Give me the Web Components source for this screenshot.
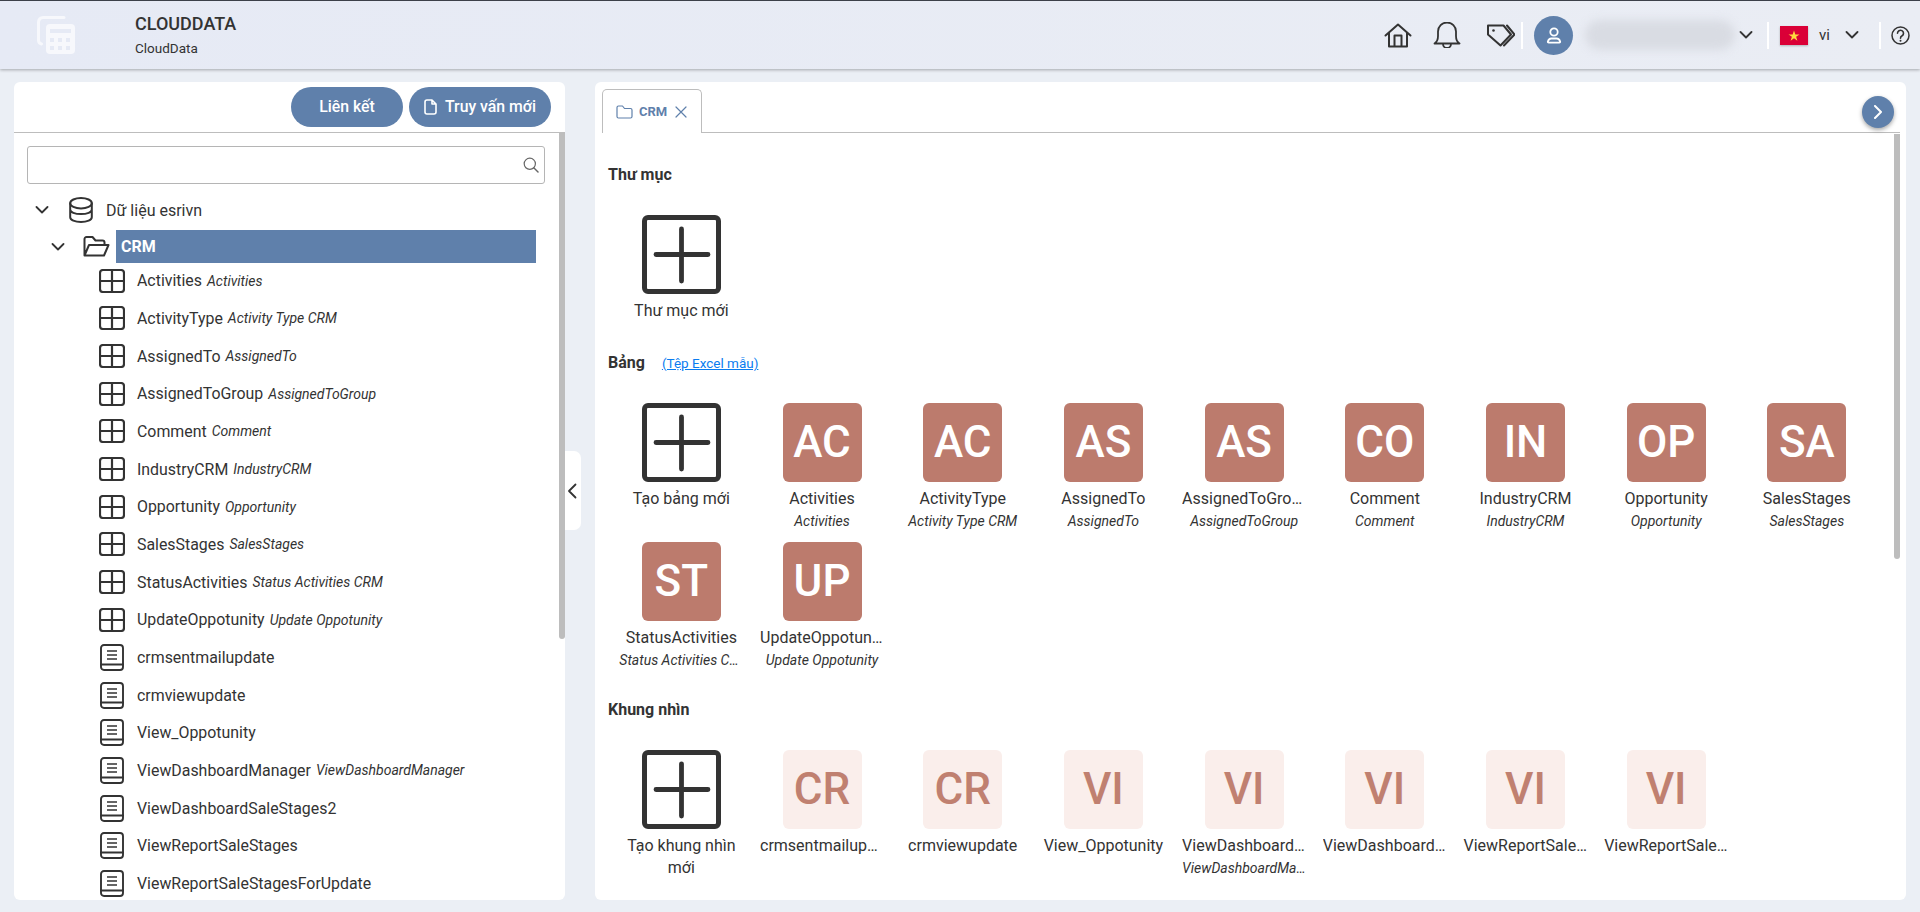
<!DOCTYPE html>
<html lang="vi">
<head>
<meta charset="utf-8">
<title>CloudData</title>
<style>
html,body{margin:0;padding:0;height:912px;overflow:hidden;background:#ebeff5;font-family:Roboto,"Noto Sans",sans-serif;color:#333}
body{display:flex;flex-direction:column}
</style>
</head>
<body>
<app-header></app-header>
<main-layout>
  <side-panel slot="left">
    <db-row>Dữ liệu esrivn</db-row>
    <crm-row>CRM</crm-row>
    <tree-row icon="table">Activities<span slot="sub">Activities</span></tree-row>
    <tree-row icon="table">ActivityType<span slot="sub">Activity Type CRM</span></tree-row>
    <tree-row icon="table">AssignedTo<span slot="sub">AssignedTo</span></tree-row>
    <tree-row icon="table">AssignedToGroup<span slot="sub">AssignedToGroup</span></tree-row>
    <tree-row icon="table">Comment<span slot="sub">Comment</span></tree-row>
    <tree-row icon="table">IndustryCRM<span slot="sub">IndustryCRM</span></tree-row>
    <tree-row icon="table">Opportunity<span slot="sub">Opportunity</span></tree-row>
    <tree-row icon="table">SalesStages<span slot="sub">SalesStages</span></tree-row>
    <tree-row icon="table">StatusActivities<span slot="sub">Status Activities CRM</span></tree-row>
    <tree-row icon="table">UpdateOppotunity<span slot="sub">Update Oppotunity</span></tree-row>
    <tree-row icon="book">crmsentmailupdate</tree-row>
    <tree-row icon="book">crmviewupdate</tree-row>
    <tree-row icon="book">View_Oppotunity</tree-row>
    <tree-row icon="book">ViewDashboardManager<span slot="sub">ViewDashboardManager</span></tree-row>
    <tree-row icon="book">ViewDashboardSaleStages2</tree-row>
    <tree-row icon="book">ViewReportSaleStages</tree-row>
    <tree-row icon="book">ViewReportSaleStagesForUpdate</tree-row>
  </side-panel>
  <content-panel slot="right">
    <item-section heading="Thư mục" gap="-2">
      <plus-tile>Thư mục mới</plus-tile>
    </item-section>
    <item-section heading="Bảng" link="(Tệp Excel mẫu)" gap="18">
      <plus-tile>Tạo bảng mới</plus-tile>
      <data-tile code="AC" sub="Activities">Activities</data-tile>
      <data-tile code="AC" sub="Activity Type CRM">ActivityType</data-tile>
      <data-tile code="AS" sub="AssignedTo">AssignedTo</data-tile>
      <data-tile code="AS" sub="AssignedToGroup">AssignedToGroup</data-tile>
      <data-tile code="CO" sub="Comment">Comment</data-tile>
      <data-tile code="IN" sub="IndustryCRM">IndustryCRM</data-tile>
      <data-tile code="OP" sub="Opportunity">Opportunity</data-tile>
      <data-tile code="SA" sub="SalesStages">SalesStages</data-tile>
      <data-tile code="ST" sub="Status Activities CRM">StatusActivities</data-tile>
      <data-tile code="UP" sub="Update Oppotunity">UpdateOppotunity</data-tile>
    </item-section>
    <item-section heading="Khung nhìn" gap="0">
      <plus-tile>Tạo khung nhìn mới</plus-tile>
      <data-tile light code="CR">crmsentmailupdate</data-tile>
      <data-tile light code="CR">crmviewupdate</data-tile>
      <data-tile light code="VI">View_Oppotunity</data-tile>
      <data-tile light code="VI" sub="ViewDashboardManager">ViewDashboardManager</data-tile>
      <data-tile light code="VI">ViewDashboardSaleStages2</data-tile>
      <data-tile light code="VI">ViewReportSaleStages</data-tile>
      <data-tile light code="VI">ViewReportSaleStagesForUpdate</data-tile>
    </item-section>
  </content-panel>
</main-layout>

<script>
const svg = (w, h, body, extra = '') =>
  `<svg width="${w}" height="${h}" viewBox="0 0 ${w} ${h}" fill="none" stroke="currentColor" stroke-linecap="round" stroke-linejoin="round" style="display:block;flex:none" ${extra}>${body}</svg>`;

const ICONS = {
  chevron: svg(14, 8, '<path d="M1.5 1l5.5 5.5L12.5 1" stroke-width="1.8"/>'),
  logo: `<svg width="38" height="38" viewBox="0 0 38 38" style="display:block;flex:none">
    <path d="M27 1.500H6a4.500 4.500 0 0 0-4.500 4.500V24a4 4 0 0 0 3 4" fill="none" stroke="#f7f8fc" stroke-width="3" stroke-linecap="round"/>
    <rect x="9" y="8" width="29" height="30" rx="4" fill="#f7f8fc"/>
    <rect x="13" y="13" width="21" height="4" fill="#e6eaf5"/>
    <g fill="#e6eaf5"><rect x="13" y="22" width="4" height="4"/><rect x="21" y="22" width="4" height="4"/><rect x="29" y="22" width="4" height="4"/><rect x="13" y="30" width="4" height="4"/><rect x="21" y="30" width="4" height="4"/><rect x="29" y="30" width="4" height="4"/></g>
  </svg>`,
  home: svg(28, 25, '<path d="M1.500 12.500L14 1.500l12.500 11M5 10v13.500h18V10M10.500 23.500v-11h7v11" stroke-width="2"/>'),
  bell: svg(28, 26, '<path d="M1.500 21.500c2.500-1.500 3.500-4 3.500-7.500V9.500a9 9 0 0 1 18 0V14c0 3.500 1 6 3.500 7.500zM10 22a4 4 0 0 0 8 0" stroke-width="1.800"/>'),
  tags: svg(28, 23, '<path d="M1 1.500h15.500L24 10.500 13.500 21.500 1 10.500zM20 1.500L27.500 10.500 17 21.500" stroke-width="2"/><circle cx="6.500" cy="6.500" r="1.300" fill="currentColor" stroke="none"/>'),
  user: svg(16, 17, '<circle cx="8" cy="5" r="3.700" stroke-width="1.800"/><path d="M2.800 15.700h10.400c.8 0 1.200-.6.900-1.300-.5-1.700-1.800-2.900-3.500-2.900H5.400c-1.700 0-3 1.200-3.500 2.900-.3.700.1 1.300.9 1.300z" stroke-width="1.800"/>'),
  help: svg(19, 19, '<circle cx="9.500" cy="9.500" r="8.500" stroke-width="1.500"/><path d="M6.500 7.300a3 3 0 1 1 4.600 2.500c-1 .6-1.600 1.200-1.600 2.400" stroke-width="1.600"/><circle cx="9.500" cy="14.700" r="1" fill="currentColor" stroke="none"/>'),
  doc: svg(13, 16, '<path d="M1 3a2 2 0 0 1 2-2h5l4 4v8a2 2 0 0 1-2 2H3a2 2 0 0 1-2-2zM8 1v4h4" stroke-width="1.600"/>'),
  search: svg(16, 16, '<circle cx="6.800" cy="6.800" r="5.600" stroke-width="1.200"/><path d="M11 11l4 4" stroke-width="1.500"/>'),
  db: svg(24, 26, '<ellipse cx="12" cy="6.200" rx="10.800" ry="5.200" stroke-width="2"/><path d="M1.200 6.200v14c0 2.700 4.800 4.800 10.800 4.800s10.800-2.100 10.800-4.800v-14M1.200 12.500c0 2.700 4.800 4.600 10.800 4.600s10.800-1.900 10.800-4.600" stroke-width="2"/>'),
  folderOpen: svg(27, 21, '<path d="M1.500 19.500V3a2 2 0 0 1 2-2h6l3 3.500h7a2 2 0 0 1 2 2V9M1.500 19.500L6 9h19.500l-4.500 10.500z" stroke-width="2"/>'),
  table: svg(26, 24, '<rect x="1" y="1" width="24" height="22" rx="3" stroke-width="2.200"/><path d="M13 1v22M1 12h24" stroke-width="2.200"/>'),
  book: svg(24, 27, '<rect x="1" y="1" width="22" height="25" rx="3" stroke-width="1.900"/><path d="M1 20.500h22" stroke-width="1.900"/><path d="M7 7h10M7 11h10M7 15h10" stroke-width="1.500" stroke-linecap="butt"/>'),
  folder: svg(17, 14, '<path d="M1 11.500V2.500a1.500 1.500 0 0 1 1.500-1.500h4l2 2.500h6a1.500 1.500 0 0 1 1.500 1.500v6.500a1.500 1.500 0 0 1-1.500 1.500h-12A1.500 1.500 0 0 1 1 11.500z" stroke-width="1.200"/>'),
  close: svg(12, 12, '<path d="M1 1l10 10M11 1L1 11" stroke-width="1.200"/>'),
  plus: svg(79, 79, '<rect x="2.500" y="2.500" width="74" height="74" rx="3.500" stroke-width="5"/><path d="M39.500 14v52M14 39.500h52" stroke-width="4.800"/>'),
  flag: `<svg width="28" height="19" viewBox="0 0 28 19" style="display:block;flex:none;box-shadow:0 1px 2px rgba(0,0,0,.25)"><rect width="28" height="19" fill="#da0037"/><path d="M14 4.500l1.320 3.900h4.130l-3.340 2.420 1.280 3.930L14 12.330l-3.390 2.420 1.280-3.930-3.340-2.420h4.130z" fill="#ffd83d"/></svg>`,
  back: svg(10, 16, '<path d="M8.500 1.500L2 8l6.500 6.500" stroke-width="1.800"/>'),
  next: svg(10, 14, '<path d="M2 1l6 6-6 6" stroke-width="2"/>')
};

class Base extends HTMLElement {
  constructor(){ super(); this.attachShadow({mode:'open'}); }
  connectedCallback(){ this.shadowRoot.innerHTML = `<style>${this.css()}</style>${this.html()}`; }
  css(){ return ''; }
  html(){ return '<slot></slot>'; }
}

customElements.define('app-header', class extends Base {
  css(){ return `
    :host{display:flex;align-items:center;flex:none;box-sizing:border-box;height:69px;border-top:1px solid #3c4049;
      background:linear-gradient(90deg,#e6eaf5,#eaedf4);box-shadow:0 1px 3px rgba(0,0,0,.3);position:relative;z-index:2;padding:0 10px 0 37px;color:#333;font-family:Roboto,sans-serif}
    .brand{margin-left:60px;display:flex;flex-direction:column;flex:1;margin-top:1px}
    .t1{font-size:18px;font-weight:500;line-height:24px;}
    .t2{font-size:13.500px;line-height:24px}
    .ic{display:flex;align-items:center}
    .sep{width:2px;height:27px;background:#fff;flex:none}
    .avatar{width:39px;height:39px;border-radius:50%;background:#5f80ab;color:#fff;display:flex;align-items:center;justify-content:center;flex:none}
    .blob{width:150px;height:30px;border-radius:16px;background:#d9dce3;filter:blur(4px);flex:none}
    .vi{font-size:15px;line-height:20px;width:10px}
  `; }
  html(){ return `
    ${ICONS.logo}
    <div class="brand"><div class="t1">CLOUDDATA</div><div class="t2">CloudData</div></div>
    <div class="ic" style="margin-right:21px">${ICONS.home}</div>
    <div class="ic" style="margin-right:26px">${ICONS.bell}</div>
    <div class="ic" style="margin-right:6px">${ICONS.tags}</div>
    <div class="sep" style="margin-right:11px"></div>
    <div class="avatar">${ICONS.user}</div>
    <div class="blob" style="margin-left:12px"></div>
    <div class="ic" style="margin:0 14px 0 4px">${ICONS.chevron}</div>
    <div class="sep" style="margin-right:11px"></div>
    <div class="ic">${ICONS.flag}</div>
    <div class="vi" style="margin-left:11px">vi</div>
    <div class="ic" style="margin:0 20px 0 16px">${ICONS.chevron}</div>
    <div class="sep" style="margin-right:10px"></div>
    <div class="ic">${ICONS.help}</div>
  `; }
});

customElements.define('main-layout', class extends Base {
  css(){ return `:host{display:flex;flex:1;min-height:0;gap:30px;padding:13px 14px 12px;box-sizing:border-box}
    ::slotted([slot=left]){width:551px;flex:none}
    ::slotted([slot=right]){flex:1;min-width:0}`; }
  html(){ return `<slot name="left"></slot><slot name="right"></slot>`; }
});

customElements.define('pill-button', class extends Base {
  css(){ return `:host{display:flex;align-items:center;justify-content:center;gap:8px;height:40px;border-radius:20px;background:#5f80ab;color:#fff;font:500 15.800px/20px Roboto,sans-serif;box-sizing:border-box}`; }
  html(){ return `${this.hasAttribute('doc') ? ICONS.doc : ''}<slot></slot>`; }
});

customElements.define('side-panel', class extends Base {
  css(){ return `
    :host{display:flex;flex-direction:column;background:#fff;border-radius:6px;position:relative;font-family:Roboto,sans-serif}
    .top{flex:none;display:flex;justify-content:flex-end;gap:6px;box-sizing:border-box;height:51px;padding:5px 14px 0;border-bottom:1.500px solid #bdbdbd}
    .body{flex:1;min-height:0;overflow:hidden;padding:13px 20px 0 13px}
    .search{display:flex;align-items:center;justify-content:flex-end;box-sizing:border-box;width:518px;height:38px;border:1px solid #b5b5b5;border-radius:3px;padding-right:5px;color:#666;margin-bottom:8px}
    .thumb{position:absolute;right:0;top:51px;width:6px;height:506px;background:#bdbdbd;border-radius:0 0 3px 3px}
    .handle{position:absolute;left:100%;top:369px;width:16px;height:79px;background:#fff;border-radius:0 7px 7px 0;display:flex;align-items:center;color:#333;padding-left:2px;box-sizing:border-box}
  `; }
  html(){ return `
    <div class="top"><pill-button style="width:112px">Liên kết</pill-button><pill-button doc style="width:142px">Truy vấn mới</pill-button></div>
    <div class="body">
      <div class="search">${ICONS.search}</div>
      <slot></slot>
    </div>
    <div class="thumb"></div>
    <div class="handle">${ICONS.back}</div>
  `; }
});

customElements.define('db-row', class extends Base {
  css(){ return `:host{display:flex;align-items:center;height:36px;margin-bottom:2px;padding-left:8px;font-size:16px;color:#333}
    .ch{width:14px;margin-right:20px}.tx{margin-left:13px}`; }
  html(){ return `<div class="ch">${ICONS.chevron}</div>${ICONS.db}<div class="tx"><slot></slot></div>`; }
});

customElements.define('crm-row', class extends Base {
  css(){ return `:host{display:flex;align-items:center;height:33px;padding-left:24px;font-size:16px;color:#333;margin-bottom:-1px}
    .ch{width:14px;margin-right:18px}
    .sel{margin-left:6px;width:420px;height:33px;box-sizing:border-box;padding-left:5px;background:#5f80ab;color:#fff;font-weight:700;line-height:33px}`; }
  html(){ return `<div class="ch">${ICONS.chevron}</div>${ICONS.folderOpen}<div class="sel"><slot></slot></div>`; }
});

customElements.define('tree-row', class extends Base {
  css(){ return `:host{display:flex;align-items:center;height:37.67px;padding-left:72px;font-size:15.900px;color:#333;white-space:nowrap}
    .ic{width:26px;display:flex;justify-content:center;margin-right:12px}
    .sub{font-style:italic;font-size:14px;margin-left:5px}`; }
  html(){ return `<div class="ic">${ICONS[this.getAttribute('icon')]}</div><slot></slot><span class="sub"><slot name="sub"></slot></span>`; }
});

customElements.define('content-panel', class extends Base {
  css(){ return `
    :host{display:flex;flex-direction:column;background:#fff;border-radius:6px;position:relative;font-family:Roboto,sans-serif;overflow:visible}
    .tabs{flex:none;height:51px;box-sizing:border-box;margin:0 6px 0 7px;padding-top:7px;border-bottom:1.500px solid #bdbdbd;display:flex}
    .tab{box-sizing:border-box;width:100px;height:44px;border:1px solid #bdbdbd;border-bottom:none;border-radius:5px 5px 0 0;background:#fff;display:flex;align-items:center;padding-left:13px;color:#5f80ab;font:700 13px/20px Roboto,sans-serif;margin-bottom:-1.500px}
    .tab span{margin:0 8px 0 6px}
    .next{position:absolute;right:12px;top:14px;width:32px;height:32px;border-radius:50%;background:#5f80ab;color:#fff;display:flex;align-items:center;justify-content:center;box-shadow:0 2px 4px rgba(0,0,0,.35)}
    .body{flex:1;min-height:0;overflow:hidden;padding:31px 0 0 13px;border-radius:0 0 6px 6px}
    .thumb{position:absolute;right:6px;top:52px;width:6px;height:425px;background:#bdbdbd;border-radius:0 0 3px 3px}
  `; }
  html(){ return `
    <div class="tabs"><div class="tab">${ICONS.folder}<span>CRM</span>${ICONS.close}</div></div>
    <div class="next">${ICONS.next}</div>
    <div class="body"><slot></slot></div>
    <div class="thumb"></div>
  `; }
});

customElements.define('item-section', class extends Base {
  css(){ return `
    :host{display:block;color:#333}
    .head{display:flex;align-items:center;gap:17px;height:22px;margin-bottom:29px;font:700 16px/22px Roboto,sans-serif}
    a{font:400 13.500px/22px Roboto,sans-serif;color:#0a7cf0;text-decoration:underline}
    .grid{display:grid;grid-template-columns:repeat(9,140.7px);margin-left:3px}
  `; }
  html(){
    const l = this.getAttribute('link');
    return `<div class="head"><span>${this.getAttribute('heading')}</span>${l ? `<a href="#">${l}</a>` : ''}</div>
      <div class="grid" style="margin-bottom:${this.getAttribute('gap')}px"><slot></slot></div>`;
  }
});

const TILE_CSS = `
  :host{display:flex;flex-direction:column;align-items:center;height:139px;font-family:Roboto,sans-serif;color:#333}
  .box{width:79px;height:79px;border-radius:6px;display:flex;align-items:center;justify-content:center;font-size:44px;line-height:79px;flex:none}
  .label{width:124px;margin-top:6px;font-size:16px;line-height:22px;text-align:center}
  .one{white-space:nowrap;overflow:hidden;text-overflow:ellipsis}
  .sub{width:124px;font-size:14px;line-height:22px;font-style:italic;text-align:center;white-space:nowrap;overflow:hidden;text-overflow:ellipsis}
`;

customElements.define('plus-tile', class extends Base {
  css(){ return TILE_CSS + `.box{color:#333}`; }
  html(){ return `<div class="box">${ICONS.plus}</div><div class="label"><slot></slot></div>`; }
});

customElements.define('data-tile', class extends Base {
  css(){ return TILE_CSS + `
    .box{background:#bc7b6d;color:#fff;font-weight:500}
    :host([light]) .box{background:#faeeeb;color:#c08070;font-weight:500}`; }
  html(){
    const s = this.getAttribute('sub');
    return `<div class="box">${this.getAttribute('code')}</div><div class="label one"><slot></slot></div>${s ? `<div class="sub">${s}</div>` : ''}`;
  }
});
</script>
</body>
</html>
